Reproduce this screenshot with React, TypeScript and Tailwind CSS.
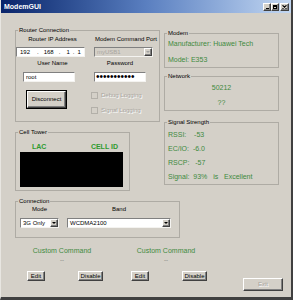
import React from "react";

const sunken =
  "border border-t-[#808080] border-l-[#808080] border-b-[#f4f3f0] border-r-[#f4f3f0]";
const raised =
  "border border-t-white border-l-white border-r-[#404040] border-b-[#404040] shadow-[inset_-1px_-1px_0_#808080]";
const green = "text-[#3e8a3e]";
const disabledText = "text-[#a8a59f] [text-shadow:1px_1px_0_#ffffff]";

function Group({
  title,
  className = "",
  children,
}: {
  title: string;
  className?: string;
  children?: React.ReactNode;
}) {
  return (
    <fieldset className={`border border-[#aeaba4] ${className}`}>
      <legend className="ml-[2px] px-[1px] text-[6px] leading-[8px] text-black">{title}</legend>
      {children}
    </fieldset>
  );
}

function Combo({
  text,
  disabled = false,
  className = "",
}: {
  text: string;
  disabled?: boolean;
  className?: string;
}) {
  return (
    <div
      className={`flex items-stretch h-[10px] ${sunken} ${disabled ? "bg-[#d4d0c8]" : "bg-white"} ${className}`}
    >
      <span
        className={`flex-1 pl-[2px] text-[6px] leading-[8px] ${disabled ? "text-[#a8a59f]" : "text-black"}`}
      >
        {text}
      </span>
      <span className={`w-[8px] flex items-center justify-center bg-[#d4d0c8] ${raised}`}>
        <svg width="4" height="2" viewBox="0 0 4 2">
          <path d="M0 0h4L2 2z" fill={disabled ? "#a0a0a0" : "#000"} />
        </svg>
      </span>
    </div>
  );
}

function Button({
  label,
  className = "",
  disabled = false,
}: {
  label: string;
  className?: string;
  disabled?: boolean;
}) {
  return (
    <div
      className={`flex items-center justify-center bg-[#d4d0c8] ${raised} text-[6px] leading-[7px] ${disabled ? disabledText : "text-black"} ${className}`}
    >
      {label}
    </div>
  );
}

function CheckRow({ label, className = "" }: { label: string; className?: string }) {
  return (
    <div className={`flex items-center gap-[3px] ${className}`}>
      <span className="w-[7px] h-[7px] border border-[#b3b0a9] bg-[#d4d0c8]" />
      <span className={`text-[6px] leading-[7px] ${disabledText}`}>{label}</span>
    </div>
  );
}

function TitleBar() {
  return (
    <div className="h-[13px] flex items-center bg-linear-to-r from-[#0a246a] via-[#5a7fc0] to-[#c4d8f2] pl-[3px] pr-[2px]">
      <span className="text-[7px] leading-[8px] font-bold text-white">ModemGUI</span>
      <div className="ml-auto flex items-center">
        <span className={`w-[8px] h-[8px] bg-[#d4d0c8] ${raised} flex items-end justify-center pb-[1px]`}>
          <span className="w-[3px] h-[1px] bg-black" />
        </span>
        <span className={`w-[8px] h-[8px] bg-[#d4d0c8] ${raised} flex items-center justify-center`}>
          <span className="w-[4px] h-[4px] border border-black border-t-2" />
        </span>
        <span className={`ml-[1px] w-[9px] h-[8px] bg-[#d4d0c8] ${raised} flex items-center justify-center`}>
          <svg width="5" height="4" viewBox="0 0 5 4">
            <path d="M0.5 0.3L4.5 3.7M4.5 0.3L0.5 3.7" stroke="#000" strokeWidth="1.1" />
          </svg>
        </span>
      </div>
    </div>
  );
}

export default function App() {
  return (
    <div className="w-[293px] h-[300px] bg-[#d4d0c8] font-['Liberation_Sans',Arial,sans-serif] border-l border-l-[#e8e6e1] border-r-2 border-r-[#404040] border-b-[3px] border-b-[#404040] overflow-hidden flex flex-col">
      <TitleBar />
      <div className="pl-[14px] flex flex-col">
        <div className="flex items-start">
          {/* Left column */}
          <div className="flex flex-col w-[145px]">
            <Group title="Router Connection" className="mt-[13px] h-[96px]">
              <div className="flex">
                <div className="flex flex-col w-[73px]">
                  <div className="mt-[2px] text-[6px] leading-[7px] text-center">Router IP Address</div>
                  <div className={`mt-[4px] h-[10px] w-[69px] bg-white ${sunken} flex items-center text-[6px] leading-[8px]`}>
                    <span className="ml-[3px]">192</span>
                    <span className="ml-[7px]">.</span>
                    <span className="ml-[5px]">168</span>
                    <span className="ml-[5px]">.</span>
                    <span className="ml-[6px]">1</span>
                    <span className="ml-[3px]">.</span>
                    <span className="ml-[3px]">1</span>
                  </div>
                  <div className="mt-[3px] text-[6px] leading-[7px] text-center">User Name</div>
                  <div className={`mt-[5px] ml-[7px] h-[10px] w-[52px] bg-white ${sunken} pl-[2px] text-[6px] leading-[8px]`}>
                    root
                  </div>
                  <div className="mt-[8px] ml-[10px] w-[41px] h-[19px] border border-black flex">
                    <Button label="Disconnect" className="flex-1" />
                  </div>
                </div>
                <div className="flex flex-col ml-[2px] w-[64px]">
                  <div className="mt-[2px] ml-[4px] text-[6px] leading-[7px] whitespace-nowrap">Modem Command Port</div>
                  <Combo text="myUSB1" disabled className="mt-[4px] ml-[3px] w-[59px]" />
                  <div className="mt-[3px] ml-[3px] w-[52px] text-[6px] leading-[7px] text-center">Password</div>
                  <div className={`mt-[5px] ml-[3px] h-[10px] w-[52px] bg-white ${sunken} pl-[1px] text-[10px] leading-[8px] overflow-hidden`}>
                    •••••••••••
                  </div>
                  <CheckRow label="Debug Logging" className="mt-[10px]" />
                  <CheckRow label="Signal Logging" className="mt-[8px]" />
                </div>
              </div>
            </Group>
            <Group title="Cell Tower" className="mt-[6px] w-[115px] h-[63px]">
              <div className="mt-[7px] flex text-[7px] leading-[8px] font-bold text-[#2f9b2f]">
                <span className="ml-[16px]">LAC</span>
                <span className="ml-auto mr-[11px]">CELL ID</span>
              </div>
              <div className="mt-[1px] ml-[4px] w-[103px] h-[35px] bg-black" />
            </Group>
          </div>

          {/* Right column */}
          <div className="flex flex-col ml-[4px] w-[115px]">
            <Group title="Modem" className="mt-[16px] h-[39px]">
              <div className={`mt-[3px] pl-[3px] text-[7px] leading-[8px] ${green} whitespace-nowrap`}>
                Manufacturer: Huawei Tech
              </div>
              <div className={`mt-[8px] pl-[3px] text-[7px] leading-[8px] ${green}`}>Model: E353</div>
            </Group>
            <Group title="Network" className="mt-[4px] h-[39px]">
              <div className={`mt-[4px] text-center text-[7px] leading-[8px] ${green}`}>50212</div>
              <div className={`mt-[7px] text-center text-[7px] leading-[8px] ${green}`}>??</div>
            </Group>
            <Group title="Signal Strength" className="mt-[7px] h-[67px]">
              <div className={`mt-[5px] pl-[3px] flex flex-col gap-[6px] text-[7px] leading-[8px] ${green} whitespace-pre`}>
                <div>RSSI:    -53</div>
                <div>EC/IO:  -6.0</div>
                <div>RSCP:   -57</div>
                <div>Signal:  93%   is   Excellent</div>
              </div>
            </Group>
          </div>
        </div>

        {/* Connection */}
        <Group title="Connection" className="mt-[6px] w-[165px] h-[41px]">
          <div className="flex">
            <div className="flex flex-col ml-[4px] w-[39px]">
              <div className="mt-[1px] text-[6px] leading-[7px] text-center">Mode</div>
              <Combo text="3G Only" className="mt-[5px] w-[39px]" />
            </div>
            <div className="flex flex-col ml-[8px] w-[104px]">
              <div className="mt-[1px] text-[6px] leading-[7px] text-center">Band</div>
              <Combo text="WCDMA2100" className="mt-[5px] w-[104px]" />
            </div>
          </div>
        </Group>

        {/* Custom commands */}
        <div className="flex items-start">
          {[0, 1].map((i) => (
            <div key={i} className="flex flex-col w-[104px]">
              <div className={`mt-[9px] w-[94px] text-center text-[7px] leading-[8px] ${green}`}>Custom Command</div>
              <div className="mt-[2px] w-[94px] text-center text-[6px] leading-[7px] text-[#707070]">--</div>
              <div className="mt-[7px] flex">
                <Button label="Edit" className="ml-[12px] w-[18px] h-[10px]" />
                <Button label="Disable" className="ml-[33px] w-[25px] h-[10px]" />
              </div>
            </div>
          ))}
          <Button label="Exit" disabled className="mt-[40px] ml-[20px] w-[40px] h-[13px]" />
        </div>
      </div>
    </div>
  );
}
